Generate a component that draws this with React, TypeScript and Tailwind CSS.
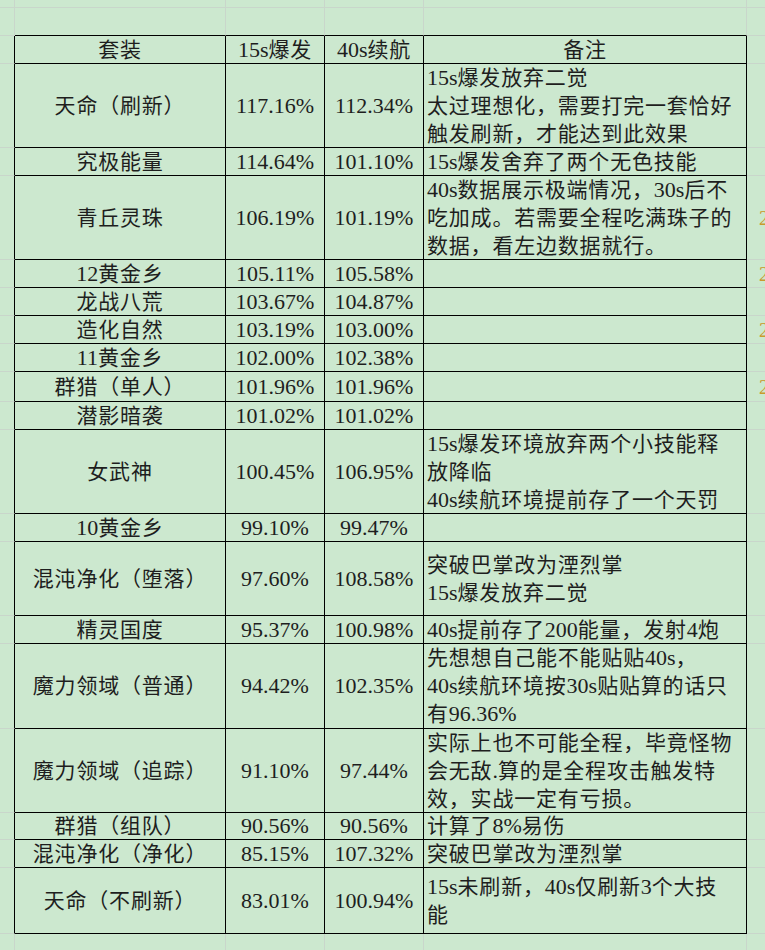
import React from "react";

const CJK = /([\u3000-\u303f\u3400-\u9fff\uff00-\uffef]+)/;

function T({ s }: { s: string }) {
  const parts = s.split(CJK).filter((p) => p.length > 0);
  return (
    <>
      {parts.map((p, i) =>
        CJK.test(p) ? (
          <span key={i} className="text-[21px] tracking-[0.8px]">
            {p}
          </span>
        ) : (
          <span key={i}>{p}</span>
        )
      )}
    </>
  );
}

type Row = {
  h: string;
  name: string;
  a: string;
  b: string;
  note: string[];
  mark?: boolean;
};

const rows: Row[] = [
  { h: "h-[84px]", name: "天命（刷新）", a: "117.16%", b: "112.34%", note: ["15s爆发放弃二觉", "太过理想化，需要打完一套恰好", "触发刷新，才能达到此效果"] },
  { h: "h-[28px]", name: "究极能量", a: "114.64%", b: "101.10%", note: ["15s爆发舍弃了两个无色技能"] },
  { h: "h-[84px]", name: "青丘灵珠", a: "106.19%", b: "101.19%", note: ["40s数据展示极端情况，30s后不", "吃加成。若需要全程吃满珠子的", "数据，看左边数据就行。"], mark: true },
  { h: "h-[28px]", name: "12黄金乡", a: "105.11%", b: "105.58%", note: [], mark: true },
  { h: "h-[28px]", name: "龙战八荒", a: "103.67%", b: "104.87%", note: [] },
  { h: "h-[28px]", name: "造化自然", a: "103.19%", b: "103.00%", note: [], mark: true },
  { h: "h-[28px]", name: "11黄金乡", a: "102.00%", b: "102.38%", note: [] },
  { h: "h-[30px]", name: "群猎（单人）", a: "101.96%", b: "101.96%", note: [], mark: true },
  { h: "h-[28px]", name: "潜影暗袭", a: "101.02%", b: "101.02%", note: [] },
  { h: "h-[84px]", name: "女武神", a: "100.45%", b: "106.95%", note: ["15s爆发环境放弃两个小技能释", "放降临", "40s续航环境提前存了一个天罚"] },
  { h: "h-[28px]", name: "10黄金乡", a: "99.10%", b: "99.47%", note: [] },
  { h: "h-[74px]", name: "混沌净化（堕落）", a: "97.60%", b: "108.58%", note: ["突破巴掌改为湮烈掌", "15s爆发放弃二觉"] },
  { h: "h-[28px]", name: "精灵国度", a: "95.37%", b: "100.98%", note: ["40s提前存了200能量，发射4炮"] },
  { h: "h-[85px]", name: "魔力领域（普通）", a: "94.42%", b: "102.35%", note: ["先想想自己能不能贴贴40s，", "40s续航环境按30s贴贴算的话只", "有96.36%"] },
  { h: "h-[84px]", name: "魔力领域（追踪）", a: "91.10%", b: "97.44%", note: ["实际上也不可能全程，毕竟怪物", "会无敌.算的是全程攻击触发特", "效，实战一定有亏损。"] },
  { h: "h-[27px]", name: "群猎（组队）", a: "90.56%", b: "90.56%", note: ["计算了8%易伤"] },
  { h: "h-[28px]", name: "混沌净化（净化）", a: "85.15%", b: "107.32%", note: ["突破巴掌改为湮烈掌"] },
  { h: "h-[66px]", name: "天命（不刷新）", a: "83.01%", b: "100.94%", note: ["15s未刷新，40s仅刷新3个大技", "能"] },
];

const faint = "border-[#c9d6cb]";

function BlankRow({ h, blackBottom }: { h: string; blackBottom?: boolean }) {
  const bb = blackBottom ? "!border-b-black" : "";
  return (
    <div className={`flex ${h}`}>
      <div className={`w-[15px] shrink-0 border-r border-b ${faint}`} />
      <div className={`w-[211px] shrink-0 border-r border-b ${faint} ${bb}`} />
      <div className={`w-[99px] shrink-0 border-r border-b ${faint} ${bb}`} />
      <div className={`w-[99px] shrink-0 border-r border-b ${faint} ${bb}`} />
      <div className={`w-[323px] shrink-0 border-r border-b ${faint} ${bb}`} />
      <div className={`flex-1 border-b ${faint}`} />
    </div>
  );
}

function TableRow({
  h,
  c1,
  c2,
  c3,
  note,
  header,
  mark,
}: {
  h: string;
  c1: string;
  c2: string;
  c3: string;
  note: string[];
  header?: boolean;
  mark?: boolean;
}) {
  return (
    <div className={`flex ${h}`}>
      <div className={`w-[15px] shrink-0 border-r border-r-black border-b ${faint}`} />
      <div className="w-[211px] shrink-0 border-r border-b border-black flex items-center justify-center leading-[28px] whitespace-nowrap">
        <T s={c1} />
      </div>
      <div className="w-[99px] shrink-0 border-r border-b border-black flex items-center justify-center leading-[28px] whitespace-nowrap">
        <T s={c2} />
      </div>
      <div className="w-[99px] shrink-0 border-r border-b border-black flex items-center justify-center leading-[28px] whitespace-nowrap">
        <T s={c3} />
      </div>
      <div
        className={`w-[323px] shrink-0 border-r border-b border-black flex flex-col justify-center leading-[28px] whitespace-nowrap ${
          header ? "items-center" : "items-start pl-[3px]"
        }`}
      >
        {note.map((l, i) => (
          <div key={i} className="h-[28px]">
            <T s={l} />
          </div>
        ))}
      </div>
      <div className={`flex-1 border-b ${faint} flex items-center overflow-hidden pl-[12px]`}>
        {mark ? <span className="text-[#c99a2e] text-[20px] leading-[28px]">2</span> : null}
      </div>
    </div>
  );
}

export default function App() {
  return (
    <div className="w-[765px] h-[950px] overflow-hidden bg-[#cce8cf] text-[#1e1e1e] text-[22px] font-['Liberation_Serif','Noto_Sans_CJK_SC',serif]">
      <BlankRow h="h-[8px]" />
      <BlankRow h="h-[28px]" blackBottom />
      <TableRow h="h-[28px]" c1="套装" c2="15s爆发" c3="40s续航" note={["备注"]} header />
      {rows.map((r, i) => (
        <TableRow key={i} h={r.h} c1={r.name} c2={r.a} c3={r.b} note={r.note} mark={r.mark} />
      ))}
      <BlankRow h="h-[28px]" />
    </div>
  );
}
